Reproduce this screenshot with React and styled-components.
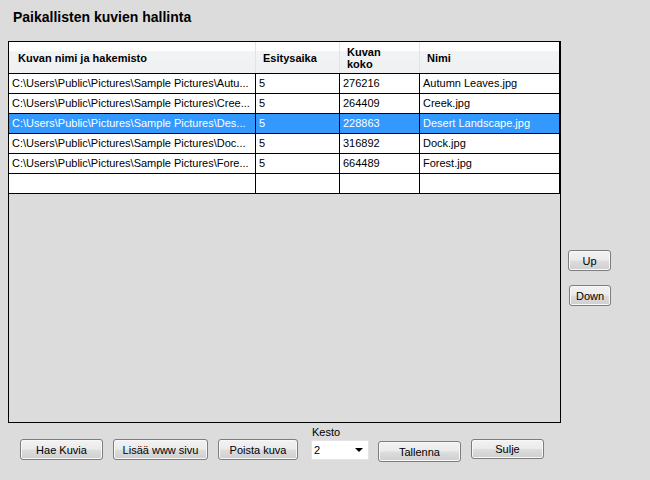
import React from 'react'
import styled, { createGlobalStyle } from 'styled-components'

const GlobalStyle = createGlobalStyle`
  html, body {
    margin: 0;
    padding: 0;
    background: #dcdcdc;
  }
  body {
    font-family: "Liberation Sans", Arial, sans-serif;
    font-size: 11px;
    color: #000;
  }
`

const Form = styled.div`
  width: 650px;
  height: 480px;
  background: #dcdcdc;
  overflow: hidden;
`

const Title = styled.h1`
  box-sizing: border-box;
  height: 41px;
  margin: 0;
  padding: 9px 0 0 13px;
  font-size: 14px;
  line-height: 16px;
  font-weight: bold;
`

const MainRow = styled.div`
  display: flex;
  align-items: flex-start;
`

const Grid = styled.div`
  box-sizing: border-box;
  width: 553px;
  height: 382px;
  margin-left: 8px;
  border: 1px solid #000;
  background: #dcdcdc;
`

const columns = '247px 84px 80px 140px'

const HeaderRow = styled.div`
  display: grid;
  grid-template-columns: ${columns};
  height: 32px;
  box-sizing: border-box;
  border-bottom: 1px solid #000;
  background: linear-gradient(to bottom, #ffffff 0%, #ffffff 30%, #f2f3f5 30%, #eef0f2 100%);
`

const HeaderCell = styled.div`
  display: flex;
  align-items: center;
  padding-left: ${p => p.$pad || 7}px;
  font-weight: bold;
  line-height: 12px;
  border-right: 1px solid ${p => (p.$last ? '#000' : '#e2e3e5')};
`

const Row = styled.div`
  display: grid;
  grid-template-columns: ${columns};
  height: 20px;
  box-sizing: border-box;
  border-bottom: 1px solid #000;
  background: ${p => (p.$selected ? '#3399ff' : '#fff')};
  color: ${p => (p.$selected ? '#fff' : '#000')};
`

const Cell = styled.div`
  padding-left: 3px;
  line-height: 19px;
  white-space: nowrap;
  overflow: hidden;
  border-right: 1px solid #000;
`

const SideColumn = styled.div`
  display: flex;
  flex-direction: column;
  align-items: flex-start;
  padding-top: 209px;
  margin-left: 7px;
`

const Button = styled.button`
  box-sizing: border-box;
  width: ${p => p.$w}px;
  height: ${p => p.$h || 21}px;
  margin-top: ${p => p.$mt || 0}px;
  margin-left: ${p => p.$ml || 0}px;
  padding: 0;
  font-family: "Liberation Sans", Arial, sans-serif;
  font-size: 11px;
  color: #000;
  border: 1px solid #7d7d7d;
  border-radius: 3px;
  background: linear-gradient(to bottom, #f2f2f2 0%, #ebebeb 48%, #dddddd 52%, #cfcfcf 100%);
  box-shadow: inset 0 0 0 1px #f8f8f8;
`

const BottomBar = styled.div`
  display: flex;
  align-items: flex-start;
  padding-left: 20px;
`

const KestoGroup = styled.div`
  display: flex;
  flex-direction: column;
  margin-left: 13px;
  margin-top: 3px;
`

const Label = styled.span`
  line-height: 13px;
  padding-left: 1px;
`

const Combo = styled.div`
  box-sizing: border-box;
  display: flex;
  align-items: center;
  justify-content: space-between;
  width: 58px;
  height: 20px;
  margin-top: 1px;
  padding: 0 5px 0 2px;
  background: #fff;
  border: 1px solid #e3e3e3;
`

const Arrow = styled.span`
  width: 0;
  height: 0;
  border-left: 4px solid transparent;
  border-right: 4px solid transparent;
  border-top: 4px solid #000;
`

const rows = [
  ['C:\\Users\\Public\\Pictures\\Sample Pictures\\Autu...', '5', '276216', 'Autumn Leaves.jpg'],
  ['C:\\Users\\Public\\Pictures\\Sample Pictures\\Cree...', '5', '264409', 'Creek.jpg'],
  ['C:\\Users\\Public\\Pictures\\Sample Pictures\\Des...', '5', '228863', 'Desert Landscape.jpg'],
  ['C:\\Users\\Public\\Pictures\\Sample Pictures\\Doc...', '5', '316892', 'Dock.jpg'],
  ['C:\\Users\\Public\\Pictures\\Sample Pictures\\Fore...', '5', '664489', 'Forest.jpg'],
  ['', '', '', ''],
]

const App = () => {
  return (
    <Form>
      <GlobalStyle />
      <Title>Paikallisten kuvien hallinta</Title>
      <MainRow>
        <Grid>
          <HeaderRow>
            <HeaderCell $pad={9}>Kuvan nimi ja hakemisto</HeaderCell>
            <HeaderCell>Esitysaika</HeaderCell>
            <HeaderCell>Kuvan<br />koko</HeaderCell>
            <HeaderCell $last>Nimi</HeaderCell>
          </HeaderRow>
          {rows.map((r, i) => (
            <Row key={i} $selected={i === 2}>
              {r.map((c, j) => (
                <Cell key={j}>{c}</Cell>
              ))}
            </Row>
          ))}
        </Grid>
        <SideColumn>
          <Button $w={43}>Up</Button>
          <Button $w={42} $mt={14} $ml={1}>Down</Button>
        </SideColumn>
      </MainRow>
      <BottomBar>
        <Button $w={83} $mt={16}>Hae Kuvia</Button>
        <Button $w={95} $mt={16} $ml={10}>Lisää www sivu</Button>
        <Button $w={80} $mt={16} $ml={10}>Poista kuva</Button>
        <KestoGroup>
          <Label>Kesto</Label>
          <Combo>
            <span>2</span>
            <Arrow />
          </Combo>
        </KestoGroup>
        <Button $w={83} $mt={18} $ml={9}>Tallenna</Button>
        <Button $w={73} $h={20} $mt={16} $ml={10}>Sulje</Button>
      </BottomBar>
    </Form>
  )
}

export default App
